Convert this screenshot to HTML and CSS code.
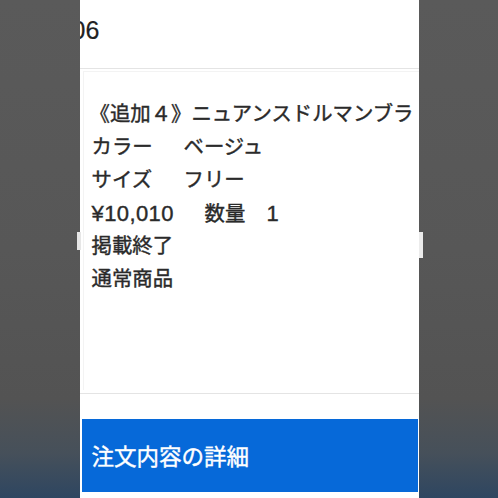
FILE: index.html
```html
<!DOCTYPE html>
<html lang="ja">
<head>
<meta charset="utf-8">
<link rel="stylesheet" href="styles.css">
</head>
<body>
<div class="panel">
  <span class="edge edge-left"></span>
  <span class="edge edge-right"></span>
  <div class="header"><span class="order-no">06</span></div>
  <div class="item">
    <div class="item-box">
      <div class="line name">《追加４》ニュアンスドルマンブラ</div>
      <div class="line"><span class="label">カラー</span><span>ベージュ</span></div>
      <div class="line"><span class="label">サイズ</span><span>フリー</span></div>
      <div class="line"><span class="price">¥10,010</span><span class="qty-label">数量</span><span class="num">1</span></div>
      <div class="line">掲載終了</div>
      <div class="line">通常商品</div>
    </div>
  </div>
  <div class="actions">
    <div class="detail-btn">注文内容の詳細</div>
  </div>
</div>
</body>
</html>
```
FILE: styles.css
```css
html, body {
  margin: 0;
  padding: 0;
  height: 100%;
}
body {
  background: linear-gradient(to bottom, #5a5a5a 0%, #575757 50%, #535353 80%, #46505a 91%, #2e4661 100%);
  font-family: "Noto Sans CJK JP", "Noto Sans", sans-serif;
  overflow: hidden;
}
.panel {
  position: relative;
  width: 339px;
  height: 498px;
  margin: 0 auto;
  background: #fff;
  display: flex;
  flex-direction: column;
}
.edge {
  position: absolute;
  top: 232px;
  width: 4px;
  background: #e6e6e6;
}
.edge-left {
  left: -3px;
  height: 18px;
}
.edge-right {
  right: -4px;
  height: 26px;
  background: #ececec;
}
.header {
  height: 69px;
  border-bottom: 1px solid #e4e4e4;
  box-sizing: border-box;
  padding-top: 14px;
  overflow: hidden;
}
.order-no {
  display: block;
  font-family: "Liberation Sans", Arial, sans-serif;
  font-size: 25px;
  line-height: 32px;
  color: #222;
  margin-left: -8px;
  -webkit-text-stroke: 0.2px #222;
}
.item {
  height: 325px;
  border-bottom: 1px solid #e4e4e4;
  box-sizing: border-box;
  padding: 2px 0 3px 3px;
  display: flex;
}
.item-box {
  flex: 1;
  border-left: 1px solid #f3f3f3;
  border-top: 1px solid #f3f3f3;
  padding: 26px 0 0 8px;
  overflow: hidden;
}
.line {
  display: flex;
  align-items: baseline;
  font-family: "Liberation Sans", "Noto Sans CJK JP", sans-serif;
  font-size: 20.4px;
  font-weight: 400;
  -webkit-text-stroke: 0.4px #2a2a2a;
  line-height: 33px;
  height: 33px;
  color: #2a2a2a;
  white-space: nowrap;
}
.name {
  margin-left: -2px;
}
.label {
  width: 92px;
}
.price {
  width: 113px;
  font-size: 22px;
  letter-spacing: 0.4px;
}
.qty-label {
  width: 62px;
}
.num {
  font-size: 22px;
}
.actions {
  padding: 25px 1px 0 2px;
}
.detail-btn {
  height: 73px;
  background: #0669d9;
  color: #fff;
  font-size: 22.5px;
  -webkit-text-stroke: 0.4px #fff;
  line-height: 73px;
  padding-left: 10px;
}
```
